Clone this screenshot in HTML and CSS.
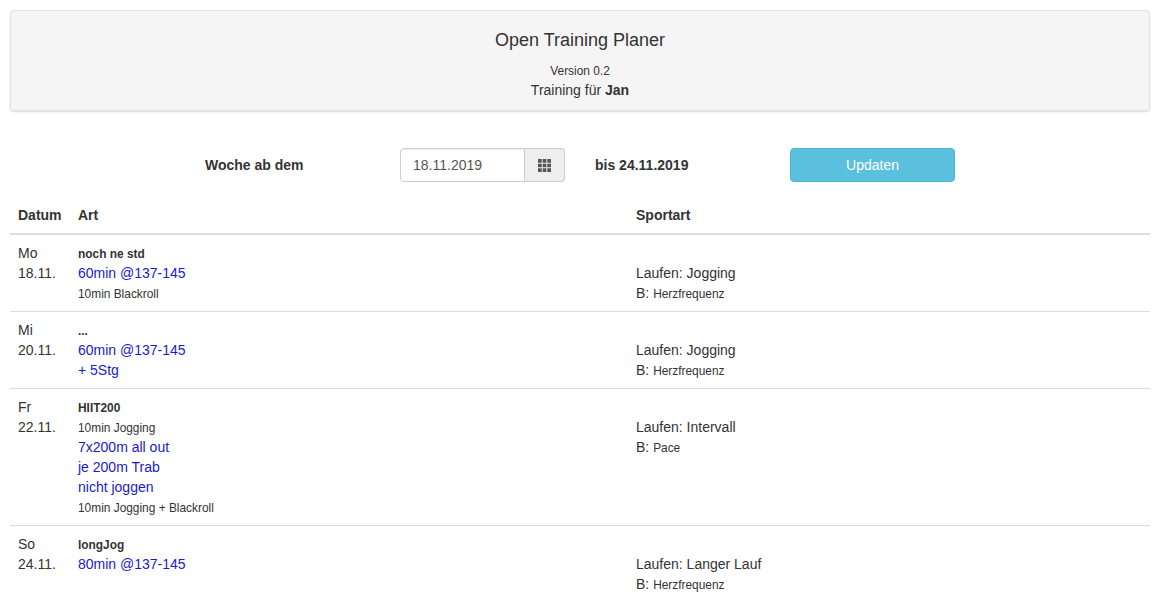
FILE: index.html
```html
<!DOCTYPE html>
<html lang="de">
<head>
<meta charset="utf-8">
<title>Open Training Planer</title>
<link rel="stylesheet" href="styles.css">
</head>
<body>
<header class="banner">
  <h1 class="banner-title">Open Training Planer</h1>
  <div class="banner-version">Version 0.2</div>
  <div>Training für <b>Jan</b></div>
</header>
<form class="toolbar">
  <b class="tool-label">Woche ab dem</b>
  <div class="date-group">
    <input class="date-input" type="text" value="18.11.2019">
    <span class="date-addon">
      <svg class="grid-icon" viewBox="0 0 14 14" width="13" height="13" aria-hidden="true">
        <path d="M0 0h4v4H0zM5 0h4v4H5zM10 0h4v4h-4zM0 5h4v4H0zM5 5h4v4H5zM10 5h4v4h-4zM0 10h4v4H0zM5 10h4v4H5zM10 10h4v4h-4z"/>
      </svg>
    </span>
  </div>
  <b class="tool-until">bis 24.11.2019</b>
  <button class="update-btn" type="button">Updaten</button>
</form>
<table class="plan">
  <thead>
    <tr><th class="col-date">Datum</th><th class="col-art">Art</th><th>Sportart</th></tr>
  </thead>
  <tbody>
    <tr>
      <td>Mo<br>18.11.</td>
      <td><b class="small">noch ne std</b><br><a class="plan-link">60min @137-145</a><br><span class="small">10min Blackroll</span></td>
      <td>&nbsp;<br>Laufen: Jogging<br>B: <span class="small">Herzfrequenz</span></td>
    </tr>
    <tr>
      <td>Mi<br>20.11.</td>
      <td><b class="small">...</b><br><a class="plan-link">60min @137-145</a><br><a class="plan-link">+ 5Stg</a></td>
      <td>&nbsp;<br>Laufen: Jogging<br>B: <span class="small">Herzfrequenz</span></td>
    </tr>
    <tr>
      <td>Fr<br>22.11.</td>
      <td><b class="small">HIIT200</b><br><span class="small">10min Jogging</span><br><a class="plan-link">7x200m all out</a><br><a class="plan-link">je 200m Trab</a><br><a class="plan-link">nicht joggen</a><br><span class="small">10min Jogging + Blackroll</span></td>
      <td>&nbsp;<br>Laufen: Intervall<br>B: <span class="small">Pace</span></td>
    </tr>
    <tr>
      <td>So<br>24.11.</td>
      <td><b class="small">longJog</b><br><a class="plan-link">80min @137-145</a></td>
      <td>&nbsp;<br>Laufen: Langer Lauf<br>B: <span class="small">Herzfrequenz</span></td>
    </tr>
  </tbody>
</table>
</body>
</html>
```
FILE: styles.css
```css
* { box-sizing: border-box; }
html, body { height: 100%; overflow: hidden; }
body {
  margin: 0;
  padding: 10px 6px 0 10px;
  font-family: "Liberation Sans", Arial, sans-serif;
  font-size: 14px;
  line-height: 20px;
  color: #333;
  background: #fff;
}
b, th { font-weight: 700; }
.small { font-size: 11.9px; line-height: 1; }

.banner {
  height: 101px;
  padding-top: 19px;
  background: #f5f5f5;
  border: 1px solid #e3e3e3;
  border-radius: 4px;
  box-shadow: 0 1px 2px rgba(0, 0, 0, .15);
  text-align: center;
}
.banner-title {
  margin: 0 0 12px;
  font-size: 18px;
  font-weight: 400;
  line-height: 20px;
}
.banner-version { font-size: 11.9px; line-height: 18px; }

.toolbar {
  display: flex;
  align-items: center;
  margin-top: 37px;
  padding-left: 195px;
  height: 34px;
}
.tool-label { width: 195px; }
.date-group { display: flex; width: 165px; height: 34px; }
.date-input {
  width: 125px;
  height: 34px;
  padding: 6px 12px;
  font: inherit;
  color: #555;
  background: #fff;
  border: 1px solid #ccc;
  border-radius: 4px 0 0 4px;
  box-shadow: inset 0 1px 1px rgba(0, 0, 0, .075);
}
.date-addon {
  display: flex;
  align-items: center;
  justify-content: center;
  width: 40px;
  background: #eee;
  border: 1px solid #ccc;
  border-left: 0;
  border-radius: 0 4px 4px 0;
}
.grid-icon { fill: #555; }
.tool-until { width: 195px; margin-left: 30px; }
.update-btn {
  width: 165px;
  height: 34px;
  padding: 6px 12px;
  font: inherit;
  color: #fff;
  background: #5bc0de;
  border: 1px solid #46b8da;
  border-radius: 4px;
}

.plan {
  width: 1140px;
  margin-top: 15px;
  border-collapse: collapse;
  table-layout: fixed;
}
.col-date { width: 60px; }
.col-art { width: 558px; }
.plan th, .plan td {
  padding: 8px;
  text-align: left;
  vertical-align: top;
}
.plan th { border-bottom: 2px solid #ddd; }
.plan td { border-top: 1px solid #ddd; }
.plan thead + tbody tr:first-child td { border-top: 0; }
.plan-link { color: #1a1acd; }
```
